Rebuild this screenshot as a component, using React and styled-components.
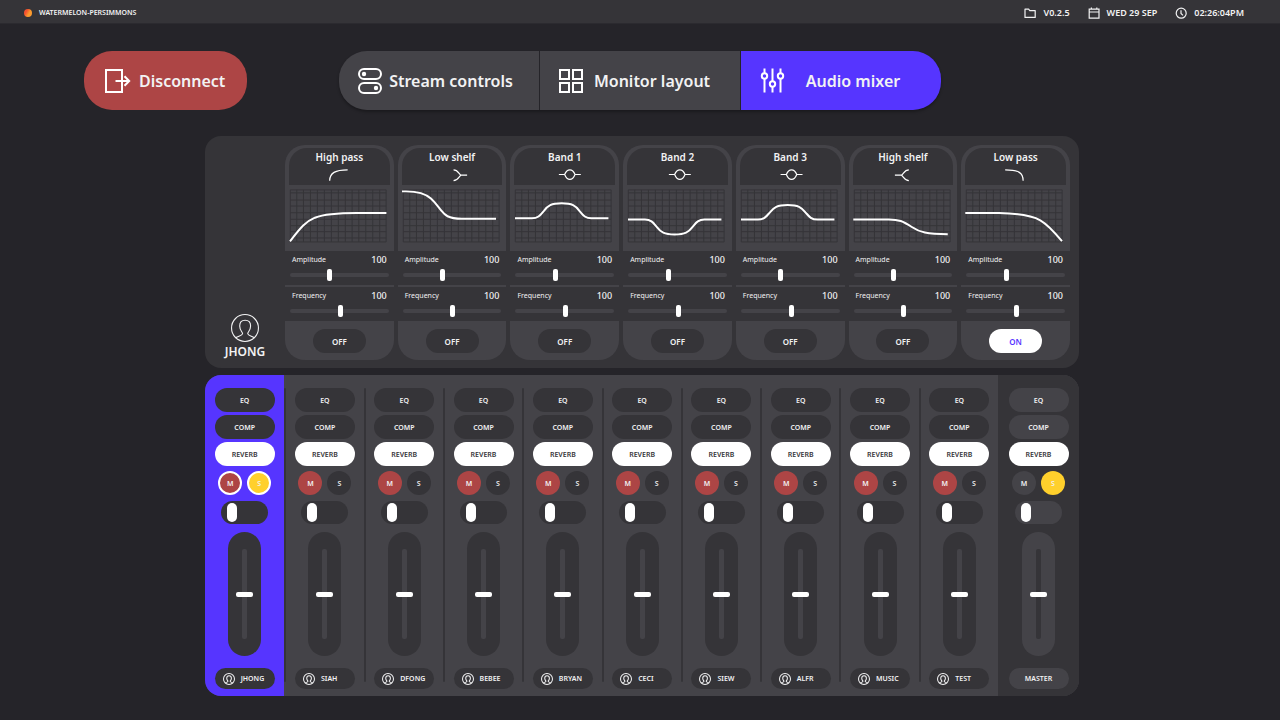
import React from 'react';
import styled, { createGlobalStyle, ThemeProvider, css } from 'styled-components';

const theme = {
  page: '#252429',
  dark: '#353438',
  light: '#444348',
  accent: '#5635ff',
  danger: '#ad4545',
  solo: '#ffd02c',
  white: '#ffffff',
  text: '#f2f2f3',
};

const GlobalStyle = createGlobalStyle`
  *, *::before, *::after { box-sizing: border-box; }
  body {
    margin: 0;
    background: ${theme.page};
    color: ${theme.text};
    font-family: 'Noto Sans', sans-serif;
    font-weight: 600;
  }
  button, input { font: inherit; color: inherit; margin: 0; padding: 0; border: 0; }
  button { cursor: pointer; }
  h2, h3, p { margin: 0; font: inherit; }
  svg { display: block; flex: none; }
`;

/* ---------- Status bar ---------- */

const StatusBar = styled.header`
  display: flex;
  align-items: center;
  justify-content: space-between;
  height: 24px;
  padding: 2px 36px 0 24px;
  background: ${(p) => p.theme.dark};
  border-bottom: 1px solid #2b2a2f;
`;

const Session = styled.p`
  display: flex;
  align-items: center;
  gap: 7px;
  font-size: 7px;
  line-height: 10px;
`;

const LiveDot = styled.span`
  width: 8px;
  height: 8px;
  border-radius: 50%;
  background: linear-gradient(120deg, #f4522f 30%, #fb9a2e 60%);
`;

const StatusList = styled.div`
  display: flex;
  gap: 18px;
`;

const StatusItem = styled.span`
  display: flex;
  align-items: center;
  gap: 7px;
  font-size: 9px;
  line-height: 14px;
`;

/* ---------- Toolbar ---------- */

const Toolbar = styled.div`
  display: grid;
  grid-template-columns: 1fr auto 1fr;
  padding: 27px 84px 26px;
`;

const ToolButton = styled.button`
  display: flex;
  align-items: center;
  height: 59px;
  font-size: 16px;
  line-height: 22px;
`;

const DisconnectButton = styled(ToolButton)`
  justify-self: start;
  gap: 8px;
  padding: 0 22px 0 21px;
  border-radius: 28px;
  background: ${(p) => p.theme.danger};
`;

const Tabs = styled.nav`
  display: grid;
  grid-template-columns: repeat(3, 200px);
  gap: 1px;
  border-radius: 28px;
  box-shadow: 0 2px 3px rgba(0, 0, 0, 0.3);
`;

const Tab = styled(ToolButton)`
  padding: 0 21px 0 19px;
  background: ${(p) => (p.$active ? p.theme.accent : p.theme.light)};
  &:first-child { border-radius: 28px 0 0 28px; }
  &:last-child { border-radius: 0 28px 28px 0; }
`;

const TabLabel = styled.span`
  flex: 1;
  text-align: center;
  white-space: nowrap;
`;

/* ---------- Panels ---------- */

const Main = styled.main`
  display: grid;
  gap: 7px;
  padding: 0 201px 24px 205px;
`;

const EqPanel = styled.section`
  display: grid;
  grid-template-columns: 80px 1fr;
  padding: 9px 9px 8px 0;
  border-radius: 16px;
  background: ${(p) => p.theme.dark};
`;

const Owner = styled.div`
  display: flex;
  flex-direction: column;
  align-items: center;
  justify-content: flex-end;
  gap: 2px;
  font-size: 12px;
  line-height: 16px;
`;

const Bands = styled.div`
  display: grid;
  grid-template-columns: repeat(7, 1fr);
  gap: 4px;
`;

const BandCard = styled.article`
  padding-top: 3px;
  border-radius: 20px;
  background: ${(p) => p.theme.light};
`;

const BandHead = styled.div`
  margin: 0 4px;
  padding: 1px 0 3px;
  border-radius: 18px 18px 0 0;
  background: ${(p) => p.theme.dark};
  text-align: center;
`;

const BandTitle = styled.h3`
  padding-bottom: 3px;
  font-size: 10px;
  line-height: 16px;
`;

const GlyphSvg = styled.svg`
  width: 100%;
  height: 14px;
  fill: none;
  stroke: ${(p) => p.theme.white};
  stroke-width: 1.2;
`;

const GraphSvg = styled.svg`
  width: 100%;
  height: 66px;
  padding: 0 4px;
  fill: none;
`;

const Params = styled.div`
  display: grid;
  gap: 2px;
`;

const Param = styled.label`
  display: grid;
  gap: 3px;
  padding: 3px 5px 4px;
  background: ${(p) => p.theme.dark};
`;

const ParamText = styled.span`
  display: flex;
  align-items: center;
  justify-content: space-between;
  padding: 0 2px;
  font-size: 7px;
  font-weight: 400;
  line-height: 12px;
`;

const ParamValue = styled.output`
  font-size: 9px;
  font-weight: 500;
`;

const Slider = styled.input`
  display: block;
  width: 100%;
  height: 12px;
  appearance: none;
  background: none;
  &::-webkit-slider-runnable-track {
    height: 4px;
    border-radius: 2px;
    background: ${(p) => p.theme.light};
  }
  &::-webkit-slider-thumb {
    appearance: none;
    width: 5px;
    height: 12px;
    margin-top: -4px;
    border-radius: 2px;
    background: ${(p) => p.theme.white};
  }
`;

const BandFoot = styled.div`
  display: flex;
  justify-content: center;
  padding: 8px 0 7px;
`;

const Pill = styled.button`
  height: 24px;
  border-radius: 12px;
  background: ${(p) => (p['aria-pressed'] ? p.theme.white : p.$raised ? p.theme.light : p.theme.dark)};
`;

const PowerPill = styled(Pill)`
  width: 53px;
  font-size: 8px;
  color: ${(p) => (p['aria-pressed'] ? p.theme.accent : p.theme.text)};
`;

/* ---------- Mixer ---------- */

const MixerPanel = styled.section`
  display: grid;
  grid-template-columns: repeat(10, 1fr) 81px;
  overflow: hidden;
  border-radius: 16px;
  background: ${(p) => p.theme.light};
`;

const backgrounds = { selected: 'accent', master: 'dark', normal: 'light' };

const Strip = styled.article`
  display: flex;
  padding: 13px 0 7px;
  background: ${(p) => p.theme[backgrounds[p.$kind]]};
`;

const Divider = styled.div`
  width: 2px;
  margin-bottom: 7px;
  border-radius: 1px;
  background: ${(p) => p.theme.dark};
`;

const StripBody = styled.div`
  flex: 1;
  display: flex;
  flex-direction: column;
  align-items: center;
`;

const Effects = styled.div`
  display: grid;
  gap: 3px;
  margin-bottom: 5px;
`;

const EffectPill = styled(Pill)`
  width: 60px;
  font-size: 7px;
  color: ${(p) => (p['aria-pressed'] ? p.theme.dark : p.theme.text)};
`;

const MuteSolo = styled.div`
  display: flex;
  gap: 5px;
  margin-bottom: 6px;
`;

const RoundButton = styled.button`
  width: 24px;
  height: 24px;
  border-radius: 50%;
  font-size: 7px;
  background: ${(p) => (p['aria-pressed'] ? p.theme[p.$tone] : p.$raised ? p.theme.light : p.theme.dark)};
  ${(p) => p.$ringed && css`border: 2px solid ${p.theme.white};`}
`;

const Toggle = styled.input`
  appearance: none;
  display: flex;
  width: 47px;
  height: 23px;
  margin-bottom: 8px;
  padding: 2px 6px;
  border-radius: 12px;
  background: ${(p) => (p.$raised ? p.theme.light : p.theme.dark)};
  cursor: pointer;
  &::before {
    content: '';
    width: 10px;
    height: 19px;
    border-radius: 5px;
    background: ${(p) => p.theme.white};
  }
  &:checked { justify-content: flex-end; }
`;

const FaderWell = styled.div`
  display: flex;
  justify-content: center;
  width: 33px;
  height: 124px;
  margin-bottom: 12px;
  padding: 17px 0;
  border-radius: 17px;
  background: ${(p) => (p.$raised ? p.theme.light : p.theme.dark)};
`;

const Fader = styled.input`
  appearance: none;
  writing-mode: vertical-lr;
  direction: rtl;
  width: 5px;
  height: 90px;
  background: none;
  &::-webkit-slider-runnable-track {
    width: 5px;
    border-radius: 2px;
    background: ${(p) => (p.$raised ? p.theme.dark : p.theme.light)};
  }
  &::-webkit-slider-thumb {
    appearance: none;
    width: 17px;
    height: 5px;
    margin-left: -6px;
    border-radius: 2px;
    background: ${(p) => p.theme.white};
  }
`;

const NameTag = styled.h3`
  display: flex;
  align-items: center;
  justify-content: ${(p) => (p.$raised ? 'center' : 'flex-start')};
  gap: 6px;
  width: 60px;
  height: 21px;
  padding: 0 8px;
  border-radius: 11px;
  font-size: 7px;
  background: ${(p) => (p.$raised ? p.theme.light : p.theme.dark)};
`;

/* ---------- Icons ---------- */

const UserIcon = ({ size, weight }) => (
  <svg width={size} height={size} viewBox="0 0 28 28" fill="none" stroke="#f2f2f3" strokeWidth={weight} aria-hidden="true">
    <circle cx="14" cy="14" r={14 - weight / 2} />
    <path d="M4.5 23.7C8 21.5 11.6 21.7 11.6 19.5C11.6 18 8.7 16.5 8.7 12C8.7 8.5 10.8 6.3 14.1 6.3S19.6 8.5 19.6 12C19.6 16.5 16.7 18 16.7 19.5C16.7 21.7 20.2 21.5 23.6 23.7" />
  </svg>
);

const SmallIcon = ({ children }) => (
  <svg width="12" height="12" viewBox="0 0 12 12" fill="none" stroke="#f2f2f3" strokeWidth="1.2" aria-hidden="true">
    {children}
  </svg>
);

const FolderIcon = () => (
  <SmallIcon>
    <path d="M1 10.4V2.2H4.6L5.8 3.6H11.2V10.4Z" strokeLinejoin="round" />
  </SmallIcon>
);

const CalendarIcon = () => (
  <SmallIcon>
    <path d="M1.2 2.2H11V11.2H1.2ZM1.2 5H11M3.4 0.4V2.6M8.8 0.4V2.6" />
  </SmallIcon>
);

const ClockIcon = () => (
  <SmallIcon>
    <circle cx="6.2" cy="6.2" r="5" />
    <path d="M6 3.2V6.4L8 8.4" />
  </SmallIcon>
);

const ToolIcon = ({ children }) => (
  <svg width="26" height="26" viewBox="0 0 26 26" fill="none" stroke="#ffffff" strokeWidth="2" aria-hidden="true">
    {children}
  </svg>
);

const ExitIcon = () => (
  <ToolIcon>
    <path d="M17 8V2H1V24H17V18" />
    <path d="M17 8V18" />
    <path d="M10.5 13H24M19.5 8.2L24.2 13L19.5 17.8" />
  </ToolIcon>
);

const SwitchesIcon = () => (
  <ToolIcon>
    <rect x="1" y="1" width="22" height="10" rx="5" />
    <rect x="1" y="15" width="22" height="10" rx="5" />
    <circle cx="6" cy="6" r="2.2" fill="#ffffff" stroke="none" />
    <circle cx="18" cy="20" r="2.2" fill="#ffffff" stroke="none" />
  </ToolIcon>
);

const GridIcon = () => (
  <ToolIcon>
    <path d="M1 2H10V11H1ZM14 2H23V11H14ZM1 15H10V24H1ZM14 15H23V24H14Z" />
  </ToolIcon>
);

const MixerIcon = () => (
  <ToolIcon>
    <path d="M4.5 0.5V5.5M4.5 10.5V24.5M12.5 0.5V13.5M12.5 18.5V24.5M20.5 0.5V5.5M20.5 10.5V24.5" />
    <circle cx="4.5" cy="8" r="2.7" />
    <circle cx="12.5" cy="16" r="2.7" />
    <circle cx="20.5" cy="8" r="2.7" />
  </ToolIcon>
);

/* ---------- Filter drawings ---------- */

const GRID_X = [1.3, 7.8, 14.5, 21.5, 28.5, 35.5, 42.5, 49.5, 56.5, 63.3, 70, 77, 84, 91, 97.4];
const GRID_Y = [4.8, 7.8, 15, 21, 27.7, 34.3, 40.7, 46.7, 53, 57];
const GRID_PATH =
  GRID_X.map((x) => `M${x} 4.8V57`).join('') + GRID_Y.map((y) => `M1.3 ${y}H97.4`).join('');

const bellGlyph = (cx) =>
  `M${cx - 11} 6.5H${cx - 5}M${cx + 5} 6.5H${cx + 11}` +
  `M${cx - 5.2} 6.5C${cx - 3.8} 3 ${cx - 2.5} 1.8 ${cx} 1.8S${cx + 3.8} 3 ${cx + 5.2} 6.5` +
  `C${cx + 3.8} 10 ${cx + 2.5} 11.4 ${cx} 11.4S${cx - 3.8} 10 ${cx - 5.2} 6.5Z`;

const bellCurve = (base, rise) => {
  const mid = base - rise / 2;
  const top = base - rise;
  return (
    `M1 ${base}H18C25 ${base} 27 ${mid + rise * 0.22} 30 ${mid}` +
    `C34 ${top + rise * 0.16} 37 ${top} 47.8 ${top}` +
    `C58.6 ${top} 61.6 ${top + rise * 0.16} 65.6 ${mid}` +
    `C68.6 ${mid + rise * 0.22} 70.6 ${base} 77.6 ${base}H94.7`
  );
};

const BANDS = [
  {
    name: 'High pass',
    glyph: 'M40.8 12.7C40.8 5 46.5 1.8 58.8 1.8',
    curve: 'M1 56.5C12 42 17 36.5 26 32.7C36 28.8 50 28 68 28H97.7',
  },
  {
    name: 'Low shelf',
    glyph: 'M51.7 1.8C56 1.8 56.5 5 59 7.2C56.5 9.4 56 12.7 51.7 12.7M59 7.2H65.3',
    curve: 'M0 6.3H4C16 6.3 23 8 29 13.5C33.5 17.5 36 21.5 39 25.2C42.8 30 46 33.7 60 33.7H94.3',
  },
  { name: 'Band 1', glyph: bellGlyph(56), curve: bellCurve(33.3, 15) },
  { name: 'Band 2', glyph: bellGlyph(53), curve: bellCurve(34.6, -15) },
  { name: 'Band 3', glyph: bellGlyph(51.7), curve: bellCurve(34.6, 14.6) },
  {
    name: 'High shelf',
    glyph: 'M56 1.8C51.7 1.8 51.2 5 48.7 7.2C51.2 9.4 51.7 12.7 56 12.7M48.7 7.2H42',
    curve: 'M0.3 34.5H36C46 34.5 50 36.2 59 42C67 47.4 74 49.2 95 49.2',
  },
  {
    name: 'Low pass',
    glyph: 'M40.3 1.8C54 1.8 58.3 5 58.3 12.7',
    curve: 'M0.3 28H34C55 28.5 67 30.5 75.5 35.3C84 40.2 90 47.5 97.3 56.3',
    on: true,
  },
];

const BandSection = ({ name, glyph, curve, on = false }) => (
  <BandCard>
    <BandHead>
      <BandTitle>{name}</BandTitle>
      <GlyphSvg viewBox="0 0 101 14" aria-hidden="true">
        <path d={glyph} />
      </GlyphSvg>
    </BandHead>
    <GraphSvg viewBox="0 0 101 66" overflow="visible" aria-hidden="true">
      <path d={GRID_PATH} stroke={theme.dark} strokeWidth="1" />
      <path d={curve} stroke={theme.white} strokeWidth="2" />
    </GraphSvg>
    <Params>
      <Param>
        <ParamText>
          Amplitude <ParamValue>100</ParamValue>
        </ParamText>
        <Slider type="range" defaultValue={40} />
      </Param>
      <Param>
        <ParamText>
          Frequency <ParamValue>100</ParamValue>
        </ParamText>
        <Slider type="range" defaultValue={51} />
      </Param>
    </Params>
    <BandFoot>
      <PowerPill type="button" aria-pressed={on}>{on ? 'ON' : 'OFF'}</PowerPill>
    </BandFoot>
  </BandCard>
);

/* ---------- Channels ---------- */

const CHANNELS = [
  { name: 'JHONG', kind: 'selected', mute: true, solo: true },
  ...['SIAH', 'DFONG', 'BEBEE', 'BRYAN', 'CECI', 'SIEW', 'ALFR', 'MUSIC', 'TEST'].map((name) => ({
    name,
    kind: 'normal',
    mute: true,
    solo: false,
  })),
  { name: 'MASTER', kind: 'master', mute: false, solo: true },
];

const ChannelStrip = ({ name, kind, mute, solo }) => {
  const raised = kind === 'master';
  const ringed = kind === 'selected';
  return (
    <Strip $kind={kind}>
      {kind === 'normal' && <Divider />}
      <StripBody>
        <Effects>
          <EffectPill type="button" $raised={raised} aria-pressed={false}>EQ</EffectPill>
          <EffectPill type="button" $raised={raised} aria-pressed={false}>COMP</EffectPill>
          <EffectPill type="button" $raised={raised} aria-pressed>REVERB</EffectPill>
        </Effects>
        <MuteSolo>
          <RoundButton type="button" $tone="danger" $raised={raised} $ringed={ringed} aria-pressed={mute}>M</RoundButton>
          <RoundButton type="button" $tone="solo" $raised={raised} $ringed={ringed} aria-pressed={solo}>S</RoundButton>
        </MuteSolo>
        <Toggle type="checkbox" role="switch" $raised={raised} aria-label={`${name} channel switch`} />
        <FaderWell $raised={raised}>
          <Fader type="range" defaultValue={50} $raised={raised} aria-label={`${name} volume`} />
        </FaderWell>
        <NameTag $raised={raised}>
          {!raised && <UserIcon size={12} weight={2.4} />}
          {name}
        </NameTag>
      </StripBody>
    </Strip>
  );
};

export default function App() {
  return (
    <ThemeProvider theme={theme}>
      <GlobalStyle />
      <StatusBar>
        <Session>
          <LiveDot />
          WATERMELON-PERSIMMONS
        </Session>
        <StatusList>
          <StatusItem><FolderIcon />V0.2.5</StatusItem>
          <StatusItem><CalendarIcon />WED 29 SEP</StatusItem>
          <StatusItem><ClockIcon />02:26:04PM</StatusItem>
        </StatusList>
      </StatusBar>
      <Toolbar>
        <DisconnectButton type="button"><ExitIcon />Disconnect</DisconnectButton>
        <Tabs>
          <Tab type="button"><SwitchesIcon /><TabLabel>Stream controls</TabLabel></Tab>
          <Tab type="button"><GridIcon /><TabLabel>Monitor layout</TabLabel></Tab>
          <Tab type="button" $active aria-current="page"><MixerIcon /><TabLabel>Audio mixer</TabLabel></Tab>
        </Tabs>
      </Toolbar>
      <Main>
        <EqPanel>
          <Owner>
            <UserIcon size={28} weight={1.1} />
            <h2>JHONG</h2>
          </Owner>
          <Bands>
            {BANDS.map((band) => <BandSection key={band.name} {...band} />)}
          </Bands>
        </EqPanel>
        <MixerPanel>
          {CHANNELS.map((channel) => <ChannelStrip key={channel.name} {...channel} />)}
        </MixerPanel>
      </Main>
    </ThemeProvider>
  );
}
